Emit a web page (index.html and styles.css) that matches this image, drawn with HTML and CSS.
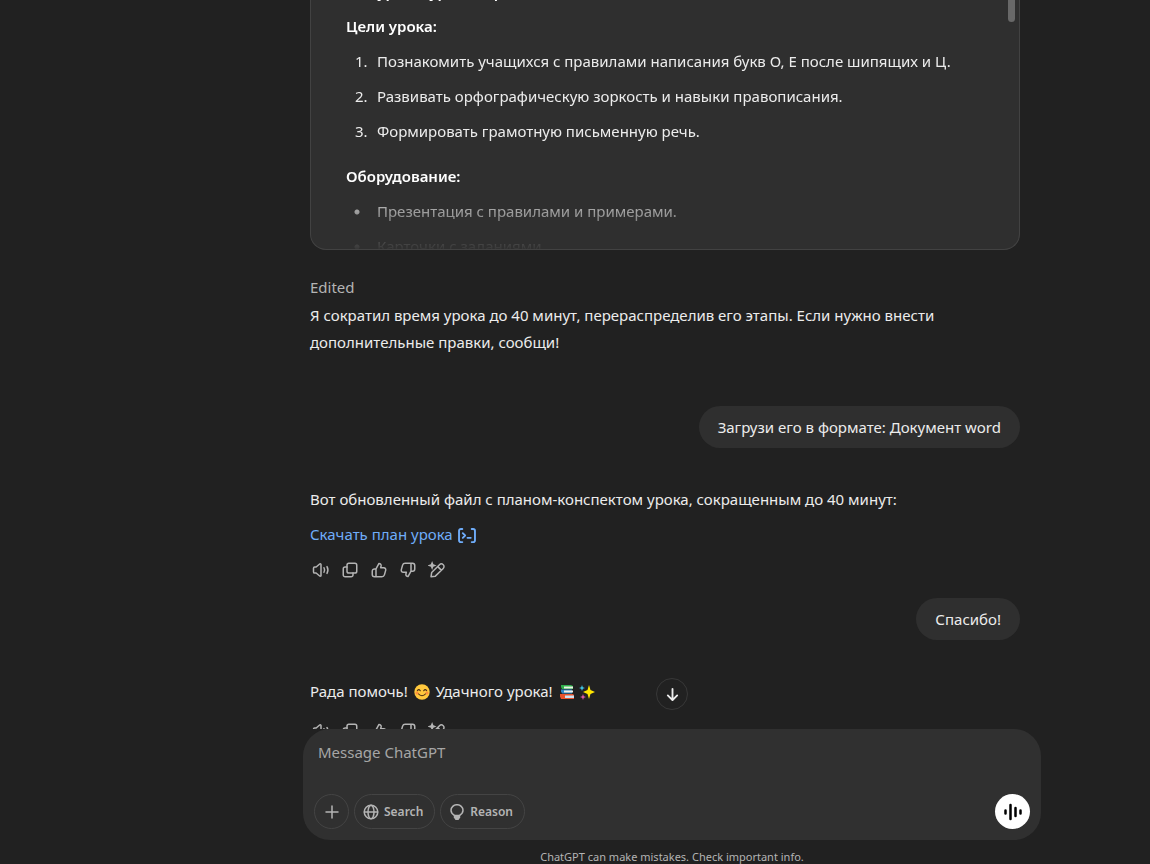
FILE: index.html
```html
<!DOCTYPE html>
<html lang="ru">
<head>
<meta charset="utf-8">
<meta name="viewport" content="width=device-width, initial-scale=1">
<title>ChatGPT</title>
<link rel="stylesheet" href="styles.css">
</head>
<body>
<svg class="sprite" aria-hidden="true">
  <symbol id="i-speaker" viewBox="0 0 24 24"><path d="M2 9.500v5c0 .8.600 1.500 1.500 1.500H5.500l4.700 4c.8.7 1.800.2 1.800-.8V4.800c0-1-1-1.500-1.800-.8L5.500 8h-2C2.600 8 2 8.700 2 9.500z"/><path d="M16 9c1 1.800 1 4.200 0 6M20 7.500c1.500 2.700 1.500 6.300 0 9"/></symbol>
  <symbol id="i-copy" viewBox="0 0 24 24"><rect x="8" y="3" width="13" height="13" rx="2.500"/><path d="M16 16v2.500a2.500 2.500 0 0 1-2.500 2.500h-8A2.500 2.500 0 0 1 3 18.500v-8A2.500 2.500 0 0 1 5.500 8H8"/></symbol>
  <symbol id="i-up" viewBox="0 0 24 24"><path d="M8 10.500 12 3.200c1.900 0 3.200 1.600 2.800 3.400L14.200 9h4.100c1.900 0 3.100 1.700 2.600 3.500l-1.700 6A3.500 3.500 0 0 1 15.800 21H6a3 3 0 0 1-3-3v-4.500a3 3 0 0 1 3-3h2zM8 10.500V21"/></symbol>
  <symbol id="i-down" viewBox="0 0 24 24"><path d="M16 13.500 12 20.800c-1.900 0-3.200-1.600-2.800-3.400L9.800 15H5.700c-1.900 0-3.100-1.700-2.600-3.500l1.700-6A3.500 3.500 0 0 1 8.200 3H18a3 3 0 0 1 3 3v4.500a3 3 0 0 1-3 3h-2zM16 13.500V3"/></symbol>
  <symbol id="i-edit" viewBox="0 0 24 24"><path d="m4 21 .9-5.600L15.300 5c1.400-1.400 3.600-1.400 5-.1s1.400 3.600 0 5L9.800 20.200 4 21zM13 7.500l4.700 4.700"/><path class="fill" d="M5.500 0 7.200 4.300 11.500 6 7.200 7.700 5.500 12 3.800 7.700-.5 6l4.300-1.700z"/></symbol>
</svg>

<main class="chat">
  <div class="thread">
    <article class="canvas-card">
      <div class="canvas-body">
        <p class="heading">Тип урока: урок открытия новых знаний</p>
        <p class="heading">Цели урока:</p>
        <ol>
          <li>Познакомить учащихся с правилами написания букв О, Е после шипящих и Ц.</li>
          <li>Развивать орфографическую зоркость и навыки правописания.</li>
          <li>Формировать грамотную письменную речь.</li>
        </ol>
        <p class="heading">Оборудование:</p>
        <ul>
          <li>Презентация с правилами и примерами.</li>
          <li>Карточки с заданиями.</li>
        </ul>
      </div>
      <span class="scroll-thumb"></span>
    </article>

    <section class="reply edited">
      <p class="note">Edited</p>
      <p>Я сократил время урока до 40 минут, перераспределив его этапы. Если нужно внести дополнительные правки, сообщи!</p>
    </section>

    <p class="bubble">Загрузи его в формате: Документ word</p>

    <section class="reply">
      <p>Вот обновленный файл с планом-конспектом урока, сокращенным до 40 минут:</p>
      <p class="download"><a href="#">Скачать план урока <svg class="code-icon" viewBox="0 0 20 16" aria-hidden="true"><path d="M5 1H3.500A2 2 0 0 0 1.500 3v10a2 2 0 0 0 2 2H5M15 1h1.500a2 2 0 0 1 2 2v10a2 2 0 0 1-2 2H15M5.500 5.500 8 8l-2.500 2.500M10.500 10.500H14"/></svg></a></p>
      <div class="actions">
        <button type="button" aria-label="Read aloud"><svg><use href="#i-speaker"/></svg></button>
        <button type="button" aria-label="Copy"><svg><use href="#i-copy"/></svg></button>
        <button type="button" aria-label="Good response"><svg><use href="#i-up"/></svg></button>
        <button type="button" aria-label="Bad response"><svg><use href="#i-down"/></svg></button>
        <button type="button" aria-label="Edit in canvas"><svg><use href="#i-edit"/></svg></button>
      </div>
    </section>

    <p class="bubble">Спасибо!</p>

    <section class="reply last">
      <p>Рада помочь!
        <svg class="emoji" viewBox="0 0 16 16" role="img" aria-label="smile"><circle cx="8" cy="8" r="7.700" fill="#ffc83d"/><path d="M3.300 6.700q1.500-2.200 3 0M9.700 6.700q1.500-2.200 3 0M4 9.500q4 4.500 8 0" fill="none" stroke="#4a2d16" stroke-width="1.100" stroke-linecap="round"/><circle cx="3" cy="9" r="1.500" fill="#ff8e3c"/><circle cx="13" cy="9" r="1.500" fill="#ff8e3c"/></svg>
        Удачного урока!
        <svg class="emoji" viewBox="0 0 16 16" role="img" aria-label="books"><path d="M2 1h10l2 1v3H3L2 3z" fill="#2fae4b"/><path d="M5 2.500h9v2H5z" fill="#e8f3e2"/><path d="M2 5.500h11v4H3L2 7.500z" fill="#2f88c8"/><path d="M5 6.500h9v2H5z" fill="#f2f0e6"/><path d="M1 10h13l1 1v4H2l-1-2.500z" fill="#e8532c"/><path d="M6 11.500h9v2.500H6z" fill="#cfe3f3"/></svg><svg class="emoji" viewBox="0 0 16 16" role="img" aria-label="sparkles"><path d="M10 1l1.500 5L16 8l-4.500 2L10 15l-1.500-5L4 8l4.500-2z" fill="#ffe600"/><path d="M3 1l.8 2.200L6 4l-2.200.8L3 7l-.8-2.200L0 4l2.200-.8z" fill="#41c7e8"/><path d="M4 10l.8 2.200L7 13l-2.200.8L4 16l-.8-2.200L1 13l2.200-.8z" fill="#e05aa8"/></svg>
      </p>
      <div class="actions">
        <button type="button" aria-label="Read aloud"><svg><use href="#i-speaker"/></svg></button>
        <button type="button" aria-label="Copy"><svg><use href="#i-copy"/></svg></button>
        <button type="button" aria-label="Good response"><svg><use href="#i-up"/></svg></button>
        <button type="button" aria-label="Bad response"><svg><use href="#i-down"/></svg></button>
        <button type="button" aria-label="Edit in canvas"><svg><use href="#i-edit"/></svg></button>
      </div>
    </section>
  </div>
</main>

<footer class="dock">
  <button class="to-bottom" type="button" aria-label="Scroll to bottom"><svg viewBox="0 0 16 16"><path d="M8 2v12M3 9l5 5 5-5"/></svg></button>
  <form class="composer">
    <textarea aria-label="Message ChatGPT" placeholder="Message ChatGPT" rows="1"></textarea>
    <div class="tools">
      <button class="pill round" type="button" aria-label="Attach"><svg viewBox="0 0 16 16"><path d="M8 2v12M2 8h12"/></svg></button>
      <button class="pill" type="button"><svg viewBox="0 0 16 16"><circle cx="8" cy="8" r="6.800"/><ellipse cx="8" cy="8" rx="3" ry="6.800"/><path d="M1.500 8h13"/></svg>Search</button>
      <button class="pill" type="button"><svg viewBox="0 0 16 16"><path d="M5.500 11.500C3.500 10.300 2 8.700 2 6.300a6 5.600 0 0 1 12 0c0 2.400-1.500 4-3.500 5.200z"/><path class="fill" d="M4.800 11.500h6.400v2L9.500 16h-3l-1.700-2.500z"/></svg>Reason</button>
      <button class="voice" type="button" aria-label="Voice mode"><svg viewBox="0 0 20 20"><path d="M2.500 8.500v3M7.500 3v14M12.500 6v8M17.500 8.500v3"/></svg></button>
    </div>
  </form>
  <p class="disclaimer">ChatGPT can make mistakes. Check important info.</p>
</footer>
</body>
</html>
```
FILE: styles.css
```css
*, *::before { box-sizing: border-box; }
body {
  margin: 0;
  height: 100vh;
  display: flex;
  flex-direction: column;
  overflow: hidden;
  background: #212121;
  color: #ececec;
  font: 15px/27px "Noto Sans", "Open Sans", sans-serif;
}
p, ol, ul { margin: 0; }
button { font: inherit; color: inherit; padding: 0; border: 0; background: none; }
svg { fill: none; stroke: currentColor; stroke-linecap: round; stroke-linejoin: round; }
.fill { fill: currentColor; stroke: none; }
.sprite { position: absolute; width: 0; height: 0; }

.chat { flex: 1; min-height: 0; overflow: hidden; padding-left: 180px; }
.thread { max-width: 710px; margin: 0 auto; display: flex; flex-direction: column; }

.canvas-card {
  position: relative;
  height: 250px;
  overflow: hidden;
  display: flex;
  flex-direction: column;
  justify-content: flex-end;
  padding: 0 35px;
  border: 1px solid #424242;
  border-top: 0;
  border-radius: 0 0 16px 16px;
  background: #2f2f2f;
}
.canvas-body {
  margin-bottom: -11px;
  -webkit-mask-image: linear-gradient(to top, transparent 8px, #000 76px);
  mask-image: linear-gradient(to top, transparent 8px, #000 76px);
}
.heading { font-weight: 600; color: #fff; margin-bottom: 8px; }
.heading:first-child { margin-bottom: 7px; }
.canvas-body ol, .canvas-body ul {
  display: flex;
  flex-direction: column;
  gap: 8px;
  padding: 0;
  list-style: none;
}
.canvas-body ol { margin-bottom: 18px; counter-reset: step; }
.canvas-body li { display: flex; }
.canvas-body li::before { flex: 0 0 31px; padding-left: 9px; }
.canvas-body ol li::before { counter-increment: step; content: counter(step) "."; }
.canvas-body ul li::before {
  content: "";
  height: 6px;
  margin-top: 11px;
  background: radial-gradient(circle at 11px 3px, #ececec 2px, transparent 3px);
}
.scroll-thumb {
  position: absolute;
  top: 0;
  right: 4px;
  width: 7px;
  height: 22px;
  border-radius: 0 0 4px 4px;
  background: #686868;
}

.edited { margin: 24px 0 50px; }
.note { color: #b4b4b4; margin-bottom: 1px; }
.bubble {
  align-self: flex-end;
  padding: 8px 19px 7px;
  border-radius: 22px;
  background: #2f2f2f;
}
.bubble + .reply { margin-top: 38px; }
.download { margin-top: 8px; }
.download a { color: #6fadfa; text-decoration: none; }
.code-icon { width: 20px; height: 15px; stroke-width: 2; vertical-align: -3px; }
.actions { display: flex; gap: 11px; padding: 13px 2px 0; color: #b4b4b4; }
.last .actions { padding-top: 17px; }
.actions button { display: flex; }
.actions svg { width: 18px; height: 18px; stroke-width: 2; }
.reply + .bubble { margin-top: 19px; }
.edited + .bubble { margin-top: 0; }
.emoji { width: 16px; height: 16px; margin: 0 2px; stroke: none; vertical-align: -3px; }

.dock { position: relative; padding-left: 194px; }
.to-bottom {
  position: absolute;
  left: calc(50% + 97px);
  bottom: calc(100% + 19px);
  transform: translateX(-50%);
  width: 32px;
  height: 32px;
  display: grid;
  place-items: center;
  border: 1px solid #383838;
  border-radius: 50%;
  background: #212121;
}
.to-bottom svg { width: 15px; height: 15px; stroke-width: 2; }
.composer {
  max-width: 738px;
  margin: 0 auto;
  padding: 10px 11px 11px;
  border-radius: 27px;
  background: #303030;
}
textarea {
  display: block;
  width: 100%;
  height: 55px;
  padding: 0 4px;
  border: 0;
  outline: 0;
  resize: none;
  overflow: hidden;
  background: none;
  color: #ececec;
  font: inherit;
}
textarea::placeholder { color: #a6a6a6; opacity: 1; }
.tools { display: flex; gap: 5px; }
.pill {
  display: flex;
  align-items: center;
  gap: 5px;
  height: 35px;
  padding: 0 11px 0 8px;
  border: 1px solid #444;
  border-radius: 18px;
  color: #b4b4b4;
  font-size: 12px;
  font-weight: 600;
}
.pill svg { width: 16px; height: 16px; stroke-width: 1.5; }
.round { width: 35px; padding: 0; justify-content: center; }
.voice {
  width: 35px;
  height: 35px;
  margin-left: auto;
  display: grid;
  place-items: center;
  border-radius: 50%;
  background: #fff;
  color: #000;
}
.voice svg { width: 20px; height: 20px; stroke-width: 2.5; }
.disclaimer {
  height: 24px;
  padding-top: 9px;
  text-align: center;
  font-size: 11px;
  line-height: 15px;
  color: #b4b4b4;
}
```
